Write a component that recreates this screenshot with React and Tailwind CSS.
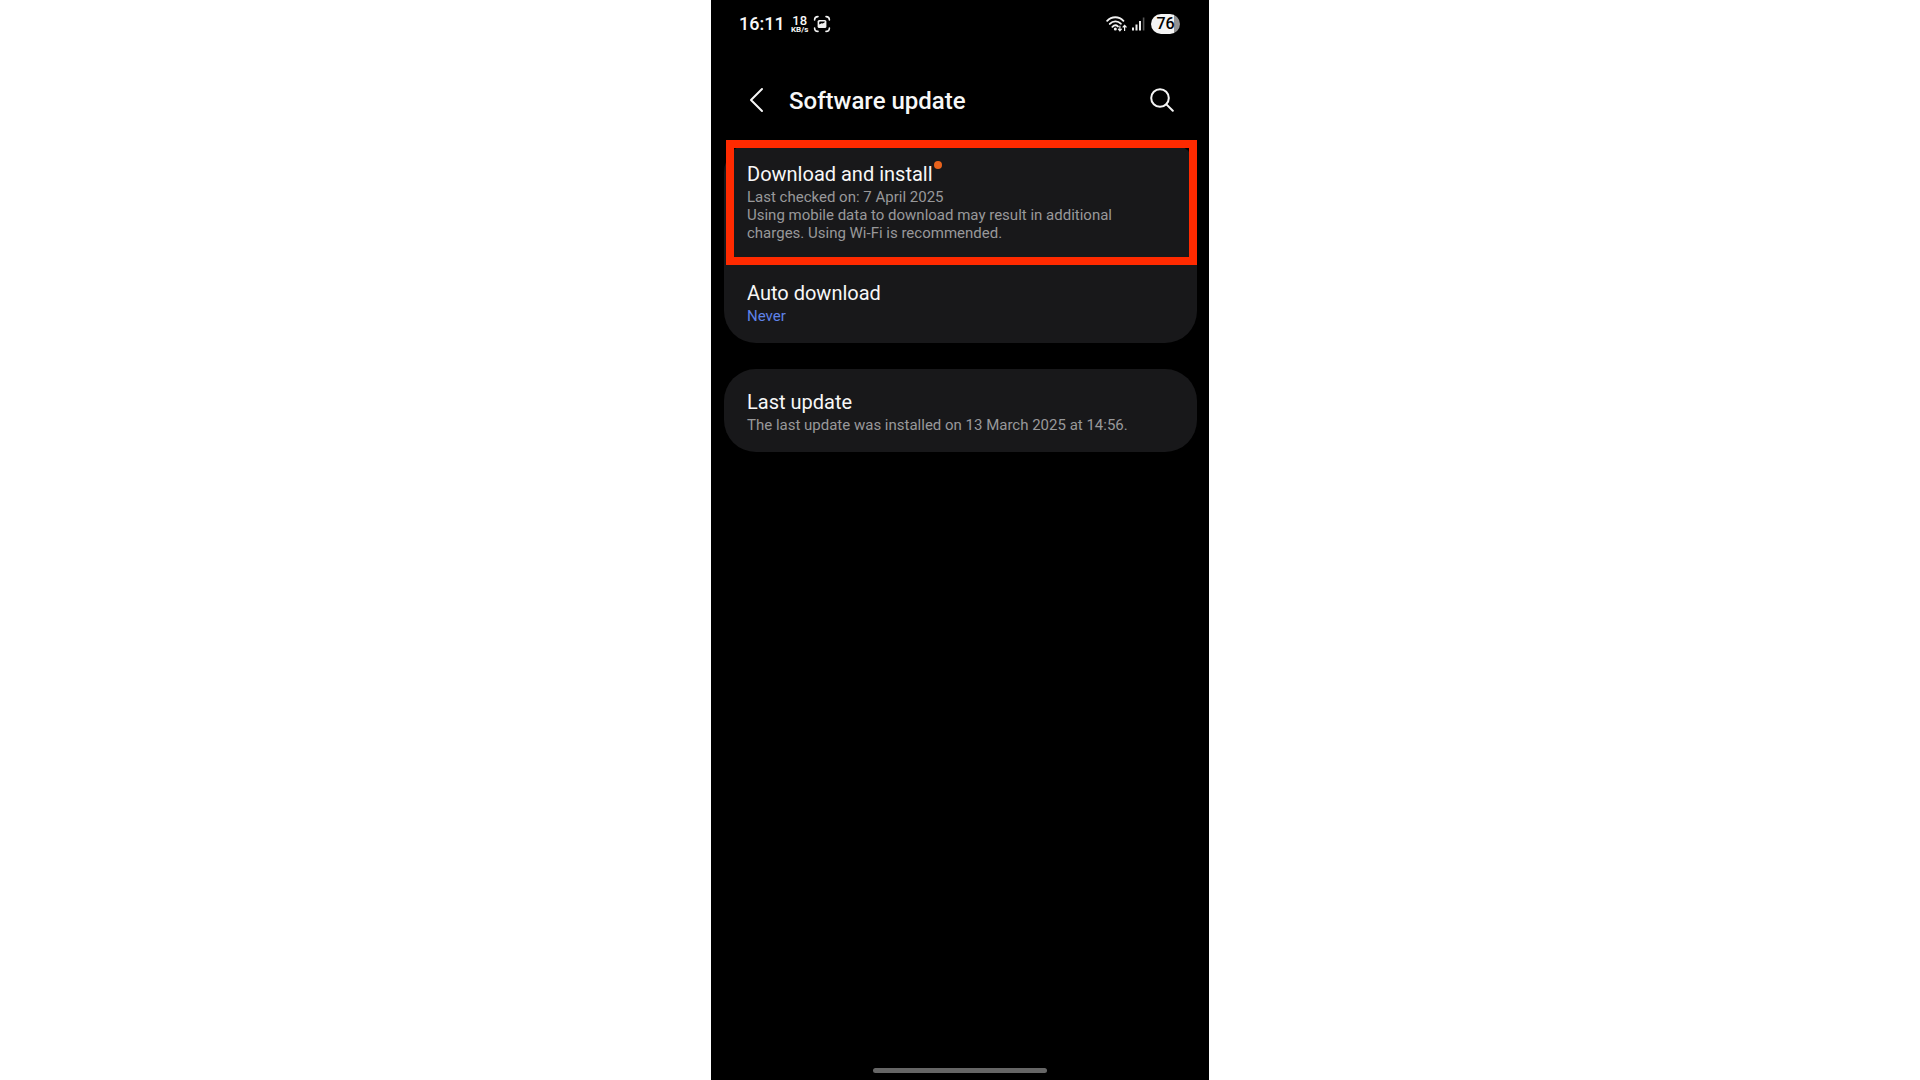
const WifiIcon = () => (
  <svg className="h-[18px] w-[22px]" viewBox="0 0 22 18" fill="none" stroke="#f2f2f2" strokeLinecap="round" aria-hidden="true">
    <path d="M1.2 5.8C5.6 1 13 1 17.4 5.8" strokeWidth="1.9" />
    <path d="M3.8 8.9C7 5.6 11.8 5.5 14.8 8.7" strokeWidth="1.9" />
    <path d="M6.4 11.8C8 10.2 10.4 10.1 12 11.4" strokeWidth="1.9" />
    <circle cx="9.3" cy="14" r="1.5" fill="#f2f2f2" stroke="none" />
    {/* data arrows */}
    <path d="M13.9 11V15.6M12.4 14.2L13.9 15.8L15.4 14.2" strokeWidth="1.2" />
    <path d="M18.6 15.4V10.6M17.1 12L18.6 10.4L20.1 12" strokeWidth="1.2" />
  </svg>
)

const SignalIcon = () => (
  <svg className="h-[14px] w-[13px]" viewBox="0 0 13 14" aria-hidden="true">
    <rect x="0" y="10.5" width="2" height="3" fill="#eee" />
    <rect x="3.5" y="7.5" width="2" height="6" fill="#eee" />
    <rect x="7" y="4" width="2" height="9.5" fill="#eee" />
    <rect x="10.8" y="0.5" width="1.6" height="13" fill="#555" />
  </svg>
)

const CaptureIcon = () => (
  <svg className="h-[18px] w-[18px]" viewBox="0 0 18 18" fill="none" stroke="#f2f2f2" strokeWidth="1.6" strokeLinecap="round" aria-hidden="true">
    <path d="M5 1.6C3 1.6 1.6 3 1.6 5M13 1.6C15 1.6 16.4 3 16.4 5M5 16.4C3 16.4 1.6 15 1.6 13M13 16.4C15 16.4 16.4 15 16.4 13" />
    <rect x="4.6" y="5" width="8.8" height="8" rx="1.6" fill="#f2f2f2" stroke="none" />
    <path d="M6.2 9.4V7.4Q6.2 6.6 7 6.6H11.8V7.2L9.8 8.6L8.6 8.2Z" fill="#000" stroke="none" />
  </svg>
)

const StatusBar = () => (
  <div className="flex h-12 items-center justify-between pr-[29px] pl-7">
    <div className="flex items-center">
      <span className="text-lg font-medium">16:11</span>
      <div className="ml-1.5 flex w-[18px] flex-col items-center">
        <span className="text-[13px] leading-[11px] font-medium">18</span>
        <span className="text-[8px] leading-[8px] font-bold">KB/s</span>
      </div>
      <div className="ml-1">
        <CaptureIcon />
      </div>
    </div>
    <div className="flex items-center">
      <WifiIcon />
      <div className="mr-1.5 ml-1">
        <SignalIcon />
      </div>
      <div className="flex h-5 w-[29px] items-center justify-center rounded-full bg-linear-to-r from-[#f4f4f4] from-78% to-[#929292] to-78% text-base leading-5 font-medium text-black">
        76
      </div>
    </div>
  </div>
)

const Header = () => (
  <header className="flex h-[92px] items-center pt-3 pr-[35px] pl-[38px]">
    <button type="button" aria-label="Back">
      <svg className="h-[26px] w-[15px]" viewBox="0 0 15 26" fill="none" stroke="#f5f5f5" strokeWidth="2" strokeLinecap="round" strokeLinejoin="round">
        <path d="M13 2L2 13L13 24" />
      </svg>
    </button>
    <h1 className="ml-[25px] flex-1 pt-0.5 text-2xl font-medium">Software update</h1>
    <button type="button" aria-label="Search">
      <svg className="h-6 w-6" viewBox="0 0 24 24" fill="none" stroke="#f5f5f5" strokeWidth="2" strokeLinecap="round">
        <circle cx="10" cy="10" r="8.8" />
        <path d="M16.4 16.4L22.8 22.8" />
      </svg>
    </button>
  </header>
)

const Row = ({ title, dot, highlight, children }) => (
  <button type="button" className="relative block w-full pt-[19px] pr-8 pb-[18px] pl-[23px] text-left">
    <span className="flex text-xl leading-7 text-[#f7f7f7]">
      {title}
      {dot && <span className="mt-px ml-px size-2 rounded-full bg-[#e8621c]" />}
    </span>
    <span className="block text-[15px] leading-[18px] text-[#98989a]">{children}</span>
    {highlight && (
      <span className="absolute -top-px right-0 -bottom-[5px] left-0.5 z-10 border-8 border-[#ff2a00]" />
    )}
  </button>
)

const Card = ({ children }) => (
  <section className="rounded-[32px] bg-[#18181a]">{children}</section>
)

const App = () => {
  return (
    <div className="min-h-screen bg-white">
      <main className="mx-auto flex min-h-screen w-full max-w-[498px] flex-col bg-black font-['Roboto',sans-serif] text-[#f7f7f7]">
        <StatusBar />
        <Header />

        <div className="flex flex-1 flex-col gap-[26px] pt-px pr-3 pl-[13px]">
          <Card>
            <Row title="Download and install" dot highlight>
              Last checked on: 7 April 2025
              <br />
              Using mobile data to download may result in additional charges. Using Wi-Fi is recommended.
            </Row>
            <Row title="Auto download">
              <span className="text-[#5f83e8]">Never</span>
            </Row>
          </Card>

          <Card>
            <Row title="Last update">The last update was installed on 13 March 2025 at 14:56.</Row>
          </Card>
        </div>

        {/* Gesture bar */}
        <div className="mx-auto mb-[7px] h-[5px] w-[174px] rounded-full bg-[#666]" />
      </main>
    </div>
  )
}

export default App
